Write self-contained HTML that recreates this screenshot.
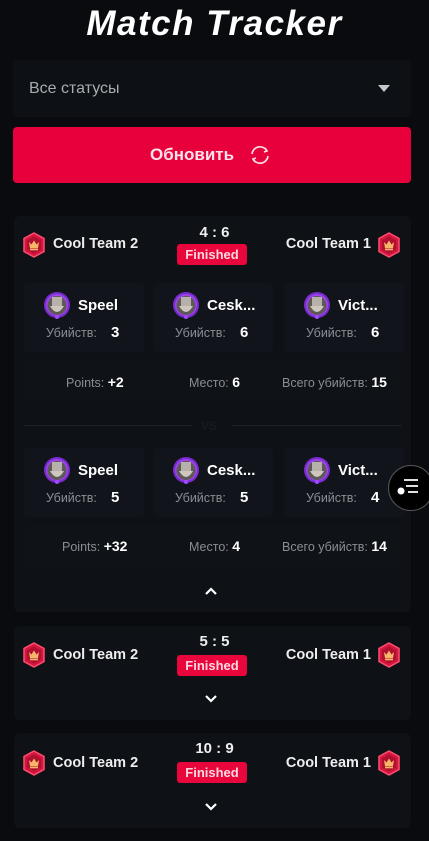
<!DOCTYPE html><html><head><meta charset="utf-8"><style>
*{margin:0;padding:0;box-sizing:border-box}
body{width:429px;height:841px;background:#090b0e;font-family:"Liberation Sans",sans-serif;color:#fff;position:relative;overflow:hidden}
.a{position:absolute}
.card{position:absolute;left:14px;width:397px;background:#0e1116;border-radius:6px}
.team{position:absolute;font-weight:bold;font-size:14.5px;color:#eee;white-space:nowrap}
.tr{right:58px;text-align:right}
.score{position:absolute;left:0;width:429px;text-align:center;font-weight:bold;font-size:15px;color:#eee}
.badge{position:absolute;left:177px;width:70px;height:21px;background:#e8063c;border-radius:3px;text-align:center;font-weight:bold;font-size:13px;line-height:21px;color:#ffd9e0}
.pbox{position:absolute;width:120px;height:69px;background:#11151b;border-radius:4px}
.pname{position:absolute;left:54px;top:14px;font-weight:bold;font-size:15px}
.kl{position:absolute;left:22px;top:43px;font-size:12.5px;color:#8a8d93}
.kv{position:absolute;left:87px;top:41px;font-size:15px;font-weight:bold}
.av{position:absolute;left:19px;top:8px}
.srow{position:absolute;left:25px;width:375px;height:42px;background:#0f1318;border-radius:4px;font-size:12.5px;color:#8a8d93}
.srow span{position:absolute;top:14px;white-space:nowrap}
.srow b{color:#fff;font-size:14px}
.chev{position:absolute;left:204px}
</style></head><body>
<svg width="0" height="0" style="position:absolute"><defs>
<g id="hex"><polygon points="11,1 21,6.5 21,19.5 11,25 1,19.5 1,6.5" fill="#d3163f" stroke="#ff4d6e" stroke-width="1.5"/><polygon points="11,4.5 18,8.5 18,17.5 11,21.5 4,17.5 4,8.5" fill="#b0102f"/><path d="M6 10 L8.5 12.5 L11 8.5 L13.5 12.5 L16 10 L15 16 H7 Z" fill="#f7b56a"/><rect x="7" y="16.5" width="8" height="1.8" fill="#f7b56a"/></g>
<g id="ava"><circle cx="14" cy="14" r="13" fill="#7a2bd0"/><circle cx="14" cy="14" r="11" fill="#9b45ea"/><circle cx="14" cy="14.5" r="9.5" fill="#5e5858"/><rect x="9" y="6" width="10" height="9" fill="#b8b0aa"/><path d="M7 15 Q14 27 21 15 Z" fill="#cfc6bd"/><circle cx="14" cy="26" r="2" fill="#a04aff"/></g>
</defs></svg>

<div class="a" style="left:0;top:4px;width:429px;text-align:center;font-size:35px;font-weight:900;font-style:italic;letter-spacing:1.5px">Match Tracker</div>

<div class="a" style="left:13px;top:60px;width:398px;height:57px;background:#0d1015;border-radius:4px"></div>
<div class="a" style="left:29px;top:80px;font-size:16px;color:#a9abae">Все статусы</div>
<svg class="a" style="left:378px;top:85px" width="12" height="8"><polygon points="0,0 12,0 6,7" fill="#c8c8c8"/></svg>

<div class="a" style="left:13px;top:127px;width:398px;height:56px;background:#e8003d;border-radius:4px"></div>
<div class="a" style="left:150px;top:145px;font-size:17px;font-weight:bold;color:#fde4ea">Обновить</div>
<svg class="a" style="left:248px;top:143px" width="24" height="24" viewBox="0 0 24 24" fill="none" stroke="#fde4ea" stroke-width="1.6"><path d="M4 11 A8 8 0 0 1 19 8"/><path d="M20 13 A8 8 0 0 1 5 16"/><path d="M17 5 L19 8 L16 9"/><path d="M7 19 L5 16 L8 15"/></svg>

<!-- card 1 -->
<div class="card" style="top:216px;height:396px"></div>
<svg class="a" style="left:23px;top:232px" width="22" height="26"><use href="#hex"/></svg>
<div class="team" style="left:53px;top:236px">Cool Team 2</div>
<div class="team tr" style="top:236px">Cool Team 1</div>
<svg class="a" style="left:378px;top:232px" width="22" height="26"><use href="#hex"/></svg>
<div class="score" style="top:224px">4 : 6</div>
<div class="badge" style="top:244px">Finished</div>

<div class="pbox" style="left:24px;top:283px"><svg class="av" width="28" height="28"><use href="#ava"/></svg><div class="pname">Speel</div><div class="kl">Убийств:</div><div class="kv">3</div></div>
<div class="pbox" style="left:153px;top:283px"><svg class="av" width="28" height="28"><use href="#ava"/></svg><div class="pname">Cesk...</div><div class="kl">Убийств:</div><div class="kv">6</div></div>
<div class="pbox" style="left:284px;top:283px"><svg class="av" width="28" height="28"><use href="#ava"/></svg><div class="pname">Vict...</div><div class="kl">Убийств:</div><div class="kv">6</div></div>
<div class="srow" style="top:360px"><span style="left:41px">Points: <b>+2</b></span><span style="left:164px">Место: <b>6</b></span><span style="left:257px">Всего убийств: <b>15</b></span></div>

<div class="a" style="left:24px;top:425px;width:168px;height:1px;background:#1c2027"></div>
<div class="a" style="left:232px;top:425px;width:170px;height:1px;background:#1c2027"></div>
<div class="a" style="left:201px;top:419px;font-size:12px;color:#171b21;font-weight:bold">VS</div>

<div class="pbox" style="left:24px;top:448px"><svg class="av" width="28" height="28"><use href="#ava"/></svg><div class="pname">Speel</div><div class="kl">Убийств:</div><div class="kv">5</div></div>
<div class="pbox" style="left:153px;top:448px"><svg class="av" width="28" height="28"><use href="#ava"/></svg><div class="pname">Cesk...</div><div class="kl">Убийств:</div><div class="kv">5</div></div>
<div class="pbox" style="left:284px;top:448px"><svg class="av" width="28" height="28"><use href="#ava"/></svg><div class="pname">Vict...</div><div class="kl">Убийств:</div><div class="kv">4</div></div>
<div class="srow" style="top:524px"><span style="left:37px">Points: <b>+32</b></span><span style="left:164px">Место: <b>4</b></span><span style="left:257px">Всего убийств: <b>14</b></span></div>
<svg class="chev" style="top:586px" width="14" height="10" viewBox="0 0 14 10" fill="none" stroke="#fff" stroke-width="2.2"><path d="M2 8 L7 3 L12 8"/></svg>

<!-- card 2 -->
<div class="card" style="top:626px;height:94px"></div>
<svg class="a" style="left:23px;top:642px" width="22" height="26"><use href="#hex"/></svg>
<div class="team" style="left:53px;top:647px">Cool Team 2</div>
<div class="team tr" style="top:647px">Cool Team 1</div>
<svg class="a" style="left:378px;top:642px" width="22" height="26"><use href="#hex"/></svg>
<div class="score" style="top:633px">5 : 5</div>
<div class="badge" style="top:655px">Finished</div>
<svg class="chev" style="top:694px" width="14" height="10" viewBox="0 0 14 10" fill="none" stroke="#fff" stroke-width="2.2"><path d="M2 2 L7 7 L12 2"/></svg>

<!-- card 3 -->
<div class="card" style="top:733px;height:95px"></div>
<svg class="a" style="left:23px;top:750px" width="22" height="26"><use href="#hex"/></svg>
<div class="team" style="left:53px;top:755px">Cool Team 2</div>
<div class="team tr" style="top:755px">Cool Team 1</div>
<svg class="a" style="left:378px;top:750px" width="22" height="26"><use href="#hex"/></svg>
<div class="score" style="top:740px">10 : 9</div>
<div class="badge" style="top:762px">Finished</div>
<svg class="chev" style="top:802px" width="14" height="10" viewBox="0 0 14 10" fill="none" stroke="#fff" stroke-width="2.2"><path d="M2 2 L7 7 L12 2"/></svg>

<!-- floating -->
<div class="a" style="left:388px;top:465px;width:46px;height:46px;border-radius:50%;background:#000;border:1px solid #555"></div>
<svg class="a" style="left:396px;top:478px" width="24" height="20" viewBox="0 0 24 20" fill="none" stroke="#fff" stroke-width="1.8"><path d="M8 2 H22 M10 8 H22 M12 14 H22"/><circle cx="5" cy="13" r="3.5" fill="#fff" stroke="none"/></svg>
</body></html>
